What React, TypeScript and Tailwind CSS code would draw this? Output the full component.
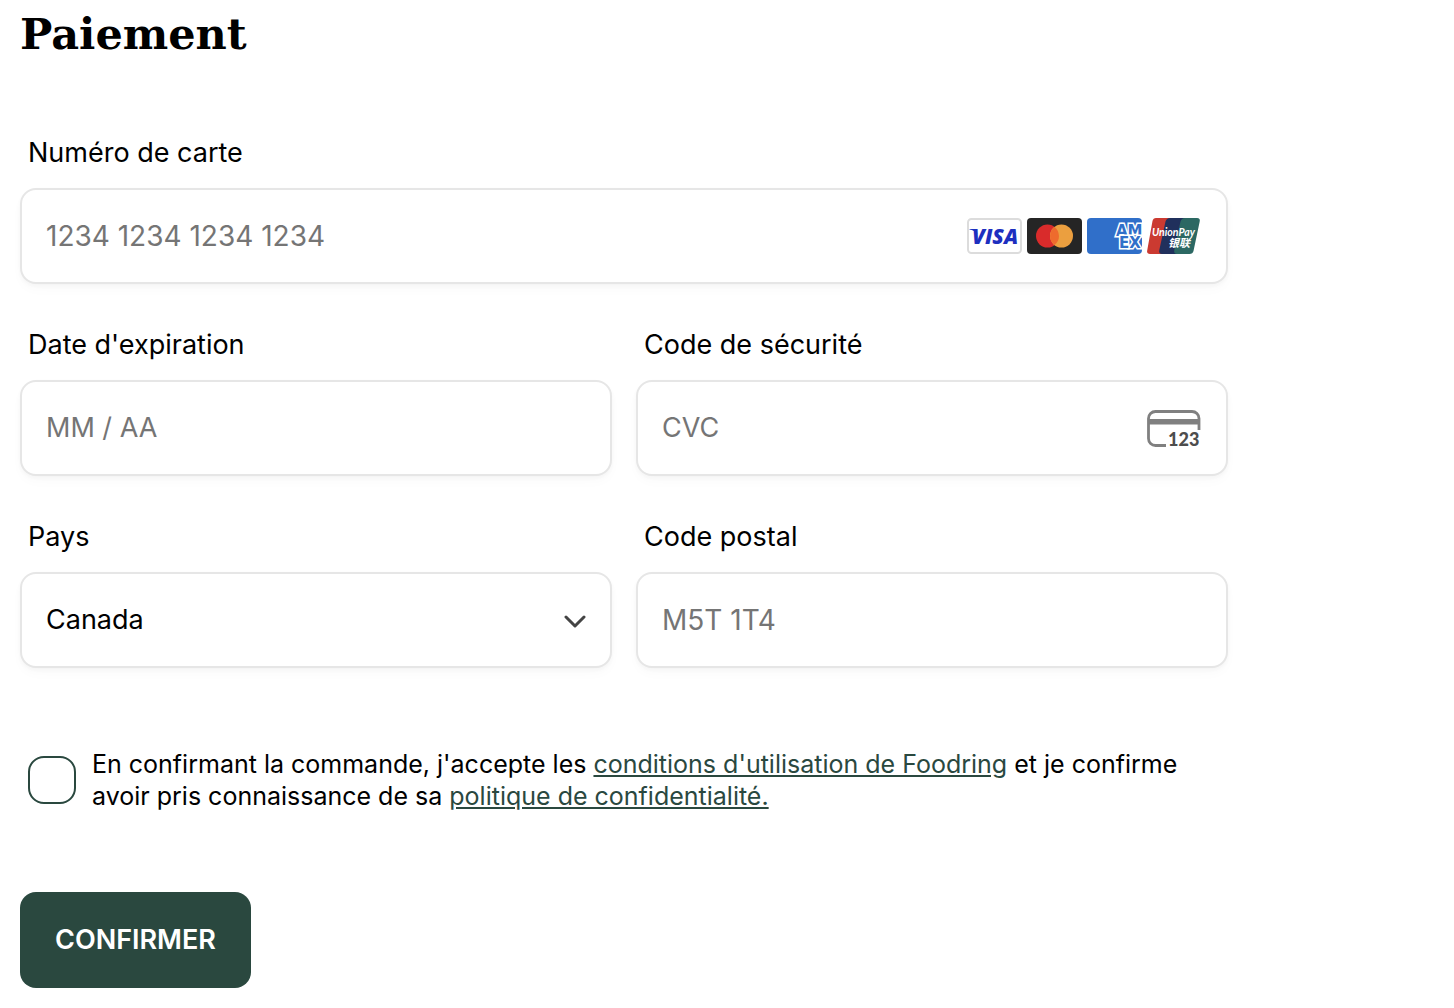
import type { ReactNode } from "react";

const inputClass =
  "w-full min-w-0 flex-1 bg-transparent leading-8 text-black outline-none placeholder:text-[#757575]";

const boxClass =
  "flex h-24 items-center rounded-2xl border-2 border-[#e6e6e6] bg-white px-6 shadow-[0_2px_4px_rgba(0,0,0,0.03),0_6px_12px_rgba(0,0,0,0.02)]";

function Field({ id, label, children, wide = false }: { id: string; label: string; children: ReactNode; wide?: boolean }) {
  return (
    <div className={wide ? "col-span-2 flex flex-col gap-[18px]" : "flex flex-col gap-[18px]"}>
      <label htmlFor={id} className="px-2 text-[27px] leading-[34px]">
        {label}
      </label>
      {children}
    </div>
  );
}

function Visa() {
  return (
    <svg viewBox="0 0 55 36" className="h-9 w-[55px]" role="img" aria-label="Visa">
      <rect x="1" y="1" width="53" height="34" rx="3.5" fill="#fff" stroke="#dcdcdc" strokeWidth="2" />
      <path d="M2.500 11h6l2 5c-2-2.600-4.800-4-8-4.500z" fill="#1d2fbf" />
      <text x="5" y="26" fontFamily="Open Sans, sans-serif" fontWeight="800" fontStyle="italic" fontSize="21" fill="#1d2fbf">
        VISA
      </text>
    </svg>
  );
}

function Mastercard() {
  return (
    <svg viewBox="0 0 55 36" className="h-9 w-[55px]" role="img" aria-label="Mastercard">
      <rect width="55" height="36" rx="4" fill="#252525" />
      <circle cx="20.5" cy="18" r="11.5" fill="#d92b2b" />
      <circle cx="34.5" cy="18" r="11.5" fill="#eb9f3f" />
      <path d="M27.500 8.900a11.500 11.500 0 0 1 0 18.200a11.500 11.500 0 0 1 0-18.200z" fill="#ee6b2d" />
    </svg>
  );
}

function Amex() {
  return (
    <svg viewBox="0 0 55 36" className="h-9 w-[55px]" role="img" aria-label="American Express">
      <defs>
        <clipPath id="amex-card">
          <rect width="55" height="36" rx="4" />
        </clipPath>
      </defs>
      <g clipPath="url(#amex-card)">
        <rect width="55" height="36" fill="#306fc9" />
        <g
          fontFamily="DejaVu Sans, sans-serif"
          fontWeight="700"
          fontSize="15"
          fill="#306fc9"
          stroke="#fff"
          strokeWidth="3"
          paintOrder="stroke"
        >
          <text x="29" y="17.5">AM</text>
          <text x="32" y="30">EX</text>
        </g>
      </g>
    </svg>
  );
}

function UnionPay() {
  return (
    <svg viewBox="0 0 55 36" className="h-9 w-[55px]" role="img" aria-label="UnionPay">
      <path d="M9 0H24L16 36H3Q-.5 36 .2 32.500L5.500 3Q6.200 0 9 0z" fill="#cb3a31" />
      <path d="M23 0H40L31 36H15Q11.500 36 12.300 32L18.500 3.500Q19.500 0 23 0z" fill="#20305c" />
      <path d="M38 0H50Q53.500 0 52.700 3.500L46.500 33Q45.800 36 42.500 36H30Q26.500 36 27.300 32L33.500 3.500Q34.500 0 38 0z" fill="#2c6863" />
      <text x="5" y="18" fontFamily="Lato, sans-serif" fontWeight="700" fontStyle="italic" fontSize="10.5" fill="#fff">
        UnionPay
      </text>
      <text x="21" y="29" fontFamily="Noto Sans CJK SC, sans-serif" fontWeight="700" fontStyle="italic" fontSize="11" fill="#fff">
        银联
      </text>
    </svg>
  );
}

function CvcIcon() {
  return (
    <svg viewBox="0 0 55 36" className="h-9 w-[55px] overflow-visible" aria-hidden="true">
      <path d="M19 35.500H8.500A7 7 0 0 1 1.500 28.500V8.500A7 7 0 0 1 8.500 1.500H45A7 7 0 0 1 52 8.500V20" fill="none" stroke="#808080" strokeWidth="2.800" />
      <rect x="1" y="9" width="52" height="5.500" fill="#808080" />
      <text x="21" y="36" fontFamily="Lato, sans-serif" fontWeight="900" fontSize="18" fill="#4d4d4d">
        123
      </text>
    </svg>
  );
}

export default function App() {
  return (
    <main className="w-full max-w-[1248px] bg-white px-5 pb-5 font-['Inter',sans-serif] text-black">
      <h1 className="font-['DejaVu_Serif',serif] text-[43px] leading-[68px] font-bold">Paiement</h1>

      <form className="mt-[68px]" onSubmit={(e) => e.preventDefault()}>
        <div className="grid grid-cols-2 gap-x-6 gap-y-11">
          <Field id="card" label="Numéro de carte" wide>
            <div className={boxClass}>
              <input id="card" type="text" inputMode="numeric" placeholder="1234 1234 1234 1234" className={`${inputClass} text-[28px]`} />
              <div className="flex shrink-0 gap-[5px]">
                <Visa />
                <Mastercard />
                <Amex />
                <UnionPay />
              </div>
            </div>
          </Field>

          <Field id="expiry" label="Date d'expiration">
            <div className={boxClass}>
              <input id="expiry" type="text" placeholder="MM / AA" className={`${inputClass} text-[27px]`} />
            </div>
          </Field>

          <Field id="cvc" label="Code de sécurité">
            <div className={boxClass}>
              <input id="cvc" type="text" placeholder="CVC" className={`${inputClass} text-[27px]`} />
              <CvcIcon />
            </div>
          </Field>

          <Field id="country" label="Pays">
            <div className="relative flex flex-col">
              <select id="country" defaultValue="CA" className={`${boxClass} w-full appearance-none text-[27px] text-black outline-none`}>
                <option value="CA">Canada</option>
                <option value="FR">France</option>
              </select>
              <svg
                viewBox="0 0 24 24"
                className="pointer-events-none absolute top-9 right-6 size-6"
                fill="none"
                stroke="#444"
                strokeWidth="3"
                strokeLinecap="round"
                strokeLinejoin="round"
                aria-hidden="true"
              >
                <path d="M2 9l9 9 9-9" />
              </svg>
            </div>
          </Field>

          <Field id="postal" label="Code postal">
            <div className={boxClass}>
              <input id="postal" type="text" placeholder="M5T 1T4" className={`${inputClass} text-[28px]`} />
            </div>
          </Field>
        </div>

        <div className="mt-20 flex items-center gap-4 pl-2">
          <input
            id="terms"
            type="checkbox"
            className="size-12 shrink-0 appearance-none rounded-2xl border-2 border-[#2a483f] bg-white checked:bg-[#2a483f]"
          />
          <label htmlFor="terms" className="text-[25px] leading-8">
            En confirmant la commande, j'accepte les{" "}
            <a href="#conditions" className="text-[#2a483f] underline">
              conditions d'utilisation de Foodring
            </a>{" "}
            et je confirme avoir pris connaissance de sa{" "}
            <a href="#confidentialite" className="text-[#2a483f] underline">
              politique de confidentialité.
            </a>
          </label>
        </div>

        <button type="submit" className="mt-20 h-24 rounded-2xl bg-[#2a483f] px-[35px] text-[27px] leading-8 font-semibold text-white">
          CONFIRMER
        </button>
      </form>
    </main>
  );
}
